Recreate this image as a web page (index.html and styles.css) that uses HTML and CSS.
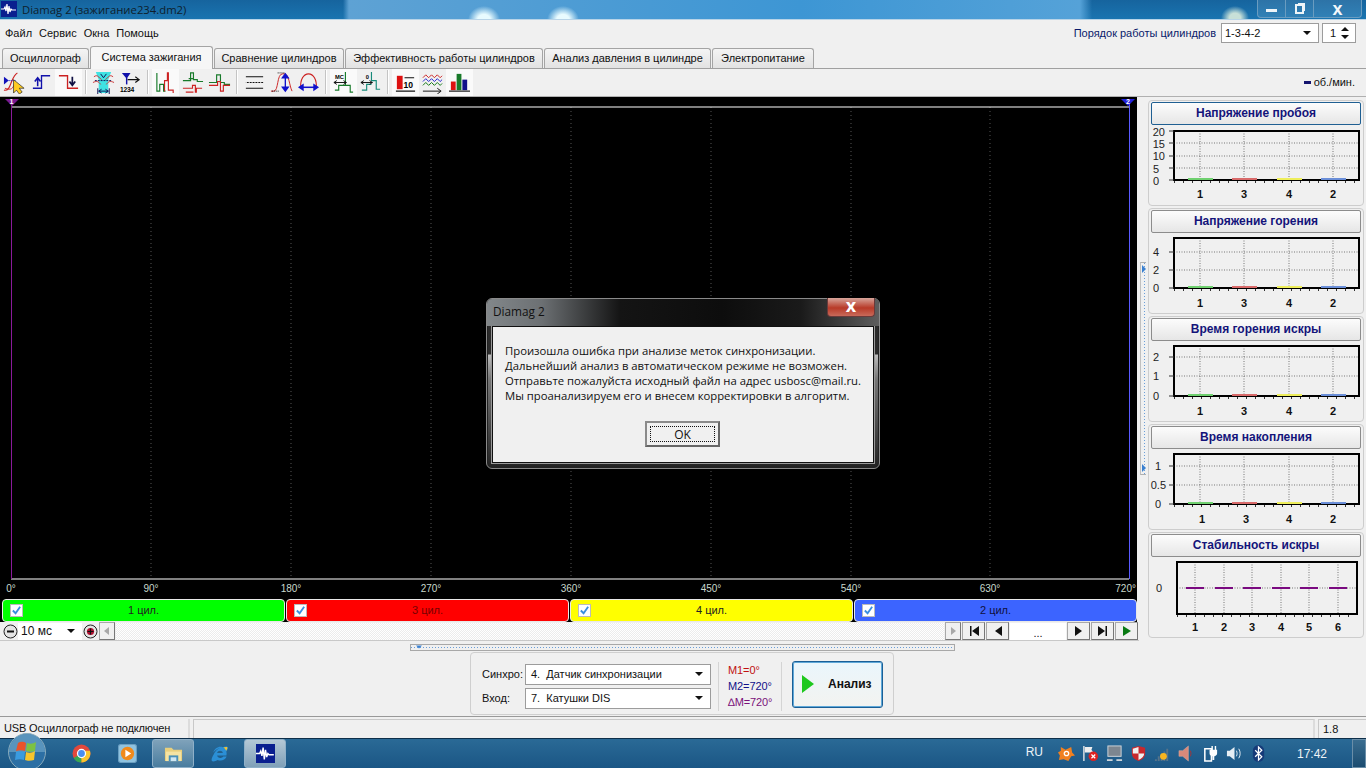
FILE: index.html
```html
<!DOCTYPE html>
<html lang="ru">
<head>
  <meta charset="UTF-8" />
  <title>Diamag 2 (зажигание234.dm2)</title>
  <link rel="stylesheet" href="styles.css">
</head>
<body>
  <div class="window">

    <!-- title bar -->
    <div class="titlebar">
      <svg class="app-icon" viewBox="0 0 16 16"><rect width="16" height="16" fill="#0a1f8f"/><path d="M0 8h3l1-2 1 4 1-7 1 10 1-8 1 6 1-3 1 1h4" fill="none" stroke="#fff" stroke-width="1.2"/></svg>
      <span class="title-text">Diamag 2 (зажигание234.dm2)</span>
      <div class="win-buttons">
        <div class="win-btn min"><i></i></div>
        <div class="win-btn restore"><i></i></div>
        <div class="win-btn close">x</div>
      </div>
    </div>

    <!-- menu -->
    <div class="menubar">
      <span>Файл</span><span>Сервис</span><span>Окна</span><span>Помощь</span>
      <div class="order">
        <label>Порядок работы цилиндров</label>
        <div class="select order-select">1-3-4-2<b class="caret"></b></div>
        <div class="spinner">1<svg viewBox="0 0 10 14" width="10" height="14"><path d="M5 1l4 4H1zM5 13l4-4H1z" fill="#111"/></svg></div>
      </div>
    </div>

    <!-- tabs -->
    <div class="tabs">
      <div class="tab w1">Осциллограф</div>
      <div class="tab w2 active">Система зажигания</div>
      <div class="tab w3">Сравнение цилиндров</div>
      <div class="tab w4">Эффективность работы цилиндров</div>
      <div class="tab w5">Анализ давления в цилиндре</div>
      <div class="tab w6">Электропитание</div>
    </div>

    <!-- toolbar -->
    <div class="toolbar">
      <div class="tool"><svg viewBox="0 0 24 24"><path d="M1 20c5 1 6-4 8-9s4-8 6-9" fill="none" stroke="#c22" stroke-width="1.2"/><path d="M2 18c4 1 8 3 10-5" fill="none" stroke="#c22"/><path d="M1 6l5 4-5 4z" fill="#11b"/><path d="M6 10h8" stroke="#11b" stroke-dasharray="1 1"/><path d="M11 9v14l3-3 3 4 3-2-3-4h5z" fill="#fc2" stroke="#222" stroke-width=".7"/></svg></div>
      <div class="tool"><svg viewBox="0 0 24 24"><path d="M3 18h9V5h9" fill="none" stroke="#11a" stroke-width="1.4"/><path d="M8 16V8M5 11l3-4 3 4" fill="none" stroke="#11a" stroke-width="1.6"/></svg></div>
      <div class="tool on"><svg viewBox="0 0 24 24"><path d="M2 5h9v13h11" fill="none" stroke="#c22" stroke-width="1.4"/><path d="M16 6v8M13 11l3 4 3-4" fill="none" stroke="#114" stroke-width="1.8"/></svg></div>
      <span class="tool-sep"></span>
      <div class="tool"><svg viewBox="0 0 24 24"><path d="M4 1h16l-3 8v14H7V9z" fill="#3fe3e3"/><path d="M2 6c4-3 5 1 8 3M22 6c-4-3-5 1-8 3M1 12c4-2 6-1 8 2M23 12c-4-2-6-1-8 2" fill="none" stroke="#c33"/><path d="M3 10h18" stroke="#115" stroke-dasharray="2 1"/><path d="M9 3l3 4 3-4" fill="none" stroke="#115"/><path d="M7 21h10M7 21l3-2M7 21l3 2M17 21l-3-2M17 21l-3 2M6 18v6M18 18v6" fill="none" stroke="#115"/></svg></div>
      <div class="tool"><svg viewBox="0 0 24 24"><path d="M3 2h9l-4 6z" fill="#11a"/><path d="M8 7v7" stroke="#11a" stroke-width="1.5"/><path d="M9 9h11M17 6l4 3-4 3" fill="none" stroke="#111" stroke-width="1.2"/><text x="1" y="22" class="tool-num">1234</text></svg></div>
      <span class="tool-sep"></span>
      <div class="tool on"><svg viewBox="0 0 24 24"><path d="M3 2v19h3V14h4v7h2" fill="none" stroke="#187a2a" stroke-width="1.2"/><path d="M11 21V10h3V2h1v18h5v3" fill="none" stroke="#c22" stroke-width="1.2"/></svg></div>
      <div class="tool"><svg viewBox="0 0 24 24"><path d="M2 10h8V2h3v7h4v2h6M8 8h5" fill="none" stroke="#187a2a" stroke-width="1.2"/><path d="M2 18h10v-3h3v7h1v-4h6M5 22h8" fill="none" stroke="#c22" stroke-width="1.2"/></svg></div>
      <div class="tool"><svg viewBox="0 0 24 24"><path d="M1 12h8V4h4v8h4v2h6" fill="none" stroke="#187a2a" stroke-width="1.2"/><path d="M1 15h9v-4h3v10h3v-6h7" fill="none" stroke="#c22" stroke-width="1.2"/></svg></div>
      <span class="tool-sep"></span>
      <div class="tool"><svg viewBox="0 0 24 24"><path d="M3 6h18M3 12h18M3 18h18" fill="none" stroke="#111" stroke-width="1.3"/><path d="M3 12h18" stroke="#f0f0f0" stroke-dasharray="1 2" stroke-width="1.4"/></svg></div>
      <div class="tool"><svg viewBox="0 0 24 24"><path d="M1 21h3c5 0 3-18 9-18h2c5 0 5 12 8 18" fill="none" stroke="#c22"/><path d="M8 2h8M2 21h8" stroke="#111" stroke-dasharray="1 1"/><path d="M16 4v16M13 7l3-4 3 4zM13 17l3 4 3-4z" fill="#11c" stroke="#11c" stroke-width="1.4"/></svg></div>
      <div class="tool"><svg viewBox="0 0 24 24"><path d="M4 18C3 9 7 3 12 3s9 6 8 15" fill="none" stroke="#c22" stroke-width="1.2"/><path d="M4 17h16" stroke="#11c" stroke-width="1.6"/><path d="M1 17l6-4v8zM23 17l-6-4v8z" fill="#11c"/></svg></div>
      <span class="tool-sep"></span>
      <div class="tool on"><svg viewBox="0 0 24 24"><path d="M14 1v14h5v7h3M14 15H7v5H3" fill="none" stroke="#187a2a" stroke-width="1.2"/><path d="M2 12h13M2 12l3-2M2 12l3 2M15 12l-3-2M15 12l-3 2" fill="none" stroke="#111"/><text x="3" y="8" class="tool-mc">MC</text></svg></div>
      <div class="tool"><svg viewBox="0 0 24 24"><path d="M13 1v9h5v9h4M13 14H8v6H3" fill="none" stroke="#178a7a" stroke-width="1.2"/><path d="M2 12h12M2 12l3-2M2 12l3 2M14 12l-3-2M14 12l-3 2" fill="none" stroke="#111"/><text x="7" y="8" class="tool-mc">0</text></svg></div>
      <span class="tool-sep"></span>
      <div class="tool on"><svg viewBox="0 0 24 24"><rect x="3" y="5" width="6" height="14" fill="#d11"/><path d="M11 7h10M2 21h20" stroke="#111" stroke-width="1.2"/><text x="10" y="18" class="tool-ten">10</text></svg></div>
      <div class="tool"><svg viewBox="0 0 24 24"><path d="M2 7l3-3 3 3 3-3 3 3 3-3 3 3 2-2" fill="none" stroke="#c22"/><path d="M2 11l3-3 3 3 3-3 3 3 3-3 3 3 2-2" fill="none" stroke="#22c"/><path d="M2 15l3-3 3 3 3-3 3 3 3-3 3 3 2-2" fill="none" stroke="#171"/><path d="M2 21h18M17 18l4 3-4 3" fill="none" stroke="#111"/></svg></div>
      <div class="tool on"><svg viewBox="0 0 24 24"><rect x="3" y="11" width="5" height="9" fill="#d11"/><rect x="9" y="3" width="5" height="17" fill="#187a2a"/><rect x="15" y="9" width="5" height="11" fill="#11118a"/><path d="M1 21h22" stroke="#111" stroke-width="1.2"/></svg></div>
      <div class="rpm"><i></i>об./мин.</div>
    </div>

    <div class="main">
      <!-- scope -->
      <div class="scope-col">
        <div class="scope">
          <svg class="scope-svg" viewBox="0 0 1137 502" width="1137" height="502">
            <path class="scope-grid" d="M151 10V482M291 10V482M431 10V482M571 10V482M711 10V482M851 10V482M990 10V482"/>
            <path d="M11 10H1129M11 482H1129" stroke="#fff" stroke-width="1.2"/>
            <path d="M11.5 2V482" stroke="#8a1a9a"/>
            <path d="M1129.5 2V482" stroke="#5a5aff"/>
            <path d="M5 2h14l-7 7z" fill="#7a1a90"/>
            <path d="M1121 2h14l-7 7z" fill="#2222dd"/>
            <text class="marker" x="11.5" y="7">1</text>
            <text class="marker" x="1128" y="7">2</text>
            <g class="scope-label">
              <text x="11" y="495">0°</text><text x="151" y="495">90°</text><text x="291" y="495">180°</text><text x="431" y="495">270°</text><text x="571" y="495">360°</text><text x="711" y="495">450°</text><text x="851" y="495">540°</text><text x="990" y="495">630°</text><text class="last" x="1136" y="495">720°</text>
            </g>
          </svg>
          <div class="channels">
            <div class="channel green"><span class="check"><svg viewBox="0 0 12 12"><path d="M2 6l3 3 5-7" fill="none" stroke="#3a8ee0" stroke-width="2"/></svg></span>1 цил.</div>
            <div class="channel red"><span class="check"><svg viewBox="0 0 12 12"><path d="M2 6l3 3 5-7" fill="none" stroke="#3a8ee0" stroke-width="2"/></svg></span>3 цил.</div>
            <div class="channel yellow"><span class="check"><svg viewBox="0 0 12 12"><path d="M2 6l3 3 5-7" fill="none" stroke="#3a8ee0" stroke-width="2"/></svg></span>4 цил.</div>
            <div class="channel blue"><span class="check"><svg viewBox="0 0 12 12"><path d="M2 6l3 3 5-7" fill="none" stroke="#3a8ee0" stroke-width="2"/></svg></span>2 цил.</div>
          </div>
        </div>

        <div class="scroll-row">
          <svg class="round" viewBox="0 0 15 15"><circle cx="7.5" cy="7.5" r="6.5" fill="#e4e4e4" stroke="#222"/><path d="M4 7.5h7" stroke="#111" stroke-width="2"/></svg>
          <div class="select time-select">10 мс<b class="caret"></b></div>
          <svg class="round" viewBox="0 0 15 15"><circle cx="7.5" cy="7.5" r="6.5" fill="#e4e4e4" stroke="#222"/><circle cx="7.5" cy="7.5" r="3.6" fill="#b01030"/><path d="M4.5 7.5h6M7.5 4.5v6" stroke="#111" stroke-width="1.2"/></svg>
          <div class="nav-btn small"><svg viewBox="0 0 10 10"><path d="M7 1v8L2 5z" fill="#a8a8a8"/></svg></div>
          <div class="track"></div>
          <div class="nav-btn small"><svg viewBox="0 0 10 10"><path d="M3 1v8l5-4z" fill="#a8a8a8"/></svg></div>
          <div class="nav-btn"><svg viewBox="0 0 12 10"><path d="M2 0h1.5v10H2zM11 0v10L4 5z" fill="#111"/></svg></div>
          <div class="nav-btn"><svg viewBox="0 0 12 10"><path d="M10 0v10L3 5z" fill="#111"/></svg></div>
          <div class="dots">...</div>
          <div class="nav-btn"><svg viewBox="0 0 12 10"><path d="M2 0v10l7-5z" fill="#111"/></svg></div>
          <div class="nav-btn"><svg viewBox="0 0 12 10"><path d="M1 0v10l7-5zM8.5 0H10v10H8.5z" fill="#111"/></svg></div>
          <div class="nav-btn"><svg viewBox="0 0 12 10"><path d="M2 0v10l8-5z" fill="#0a7a14"/></svg></div>
        </div>
      </div>

      <!-- vertical splitter -->
      <div class="vsplit">
        <div class="vsplit-line">
          <svg viewBox="0 0 4 8" width="4" height="8"><path d="M0 0v8l4-4z" fill="#3a80d0"/></svg>
          <svg viewBox="0 0 4 8" width="4" height="8"><path d="M0 0v8l4-4z" fill="#3a80d0"/></svg>
        </div>
      </div>

      <!-- right charts -->
      <div class="charts">
        <div class="group">
          <div class="group-btn focus">Напряжение пробоя</div>
          <svg class="chart" viewBox="0 0 216 82">
            <path class="grid" d="M52 6V55M96 6V55M141 6V55M185 6V55M26 18H211M26 31H211M26 43H211"/>
            <path class="frame" d="M26 6H211V55H26Z"/>
            <path class="ticks" d="M21 6H26M21 18H26M21 31H26M21 43H26M21 55H26"/>
            <path class="minor" d="M26 57H211"/>
            <path class="b1" d="M40 54H65"/><path class="b2" d="M84 54H109"/><path class="b3" d="M129 54H154"/><path class="b4" d="M173 54H198"/>
            <text class="yl" x="17" y="11">20</text><text class="yl" x="17" y="23">15</text><text class="yl" x="17" y="35">10</text><text class="yl" x="11" y="48">5</text><text class="yl" x="11" y="60">0</text>
            <text class="xl" x="52" y="73">1</text><text class="xl" x="96" y="73">3</text><text class="xl" x="141" y="73">4</text><text class="xl" x="185" y="73">2</text>
          </svg>
        </div>
        <div class="group">
          <div class="group-btn">Напряжение горения</div>
          <svg class="chart" viewBox="0 0 216 82">
            <path class="grid" d="M52 5V55M96 5V55M141 5V55M185 5V55M26 19H211M26 37H211"/>
            <path class="frame" d="M26 5H211V55H26Z"/>
            <path class="ticks" d="M21 19H26M21 37H26M21 55H26"/>
            <path class="minor" d="M26 57H211"/>
            <path class="b1" d="M40 54H65"/><path class="b2" d="M84 54H109"/><path class="b3" d="M129 54H154"/><path class="b4" d="M173 54H198"/>
            <text class="yl" x="11" y="23">4</text><text class="yl" x="11" y="41">2</text><text class="yl" x="11" y="59">0</text>
            <text class="xl" x="52" y="74">1</text><text class="xl" x="96" y="74">3</text><text class="xl" x="141" y="74">4</text><text class="xl" x="185" y="74">2</text>
          </svg>
        </div>
        <div class="group">
          <div class="group-btn">Время горения искры</div>
          <svg class="chart" viewBox="0 0 216 82">
            <path class="grid" d="M52 5V55M96 5V55M141 5V55M185 5V55M26 16H211M26 35H211"/>
            <path class="frame" d="M26 5H211V55H26Z"/>
            <path class="ticks" d="M21 16H26M21 35H26M21 55H26"/>
            <path class="minor" d="M26 57H211"/>
            <path class="b1" d="M40 54H65"/><path class="b2" d="M84 54H109"/><path class="b3" d="M129 54H154"/><path class="b4" d="M173 54H198"/>
            <text class="yl" x="11" y="20">2</text><text class="yl" x="11" y="39">1</text><text class="yl" x="11" y="59">0</text>
            <text class="xl" x="52" y="74">1</text><text class="xl" x="96" y="74">3</text><text class="xl" x="141" y="74">4</text><text class="xl" x="185" y="74">2</text>
          </svg>
        </div>
        <div class="group">
          <div class="group-btn">Время накопления</div>
          <svg class="chart" viewBox="0 0 216 82">
            <path class="grid" d="M52 5V55M96 5V55M141 5V55M185 5V55M26 17H211M26 36H211"/>
            <path class="frame" d="M26 5H211V55H26Z"/>
            <path class="ticks" d="M21 17H26M21 36H26M21 55H26"/>
            <path class="minor" d="M26 57H211"/>
            <path class="b1" d="M40 54H65"/><path class="b2" d="M84 54H109"/><path class="b3" d="M129 54H154"/><path class="b4" d="M173 54H198"/>
            <text class="yl" x="13" y="21">1</text><text class="yl" x="18" y="40">0.5</text><text class="yl" x="13" y="59">0</text>
            <text class="xl" x="54" y="74">1</text><text class="xl" x="98" y="74">3</text><text class="xl" x="141" y="74">4</text><text class="xl" x="185" y="74">2</text>
          </svg>
        </div>
        <div class="group">
          <div class="group-btn">Стабильность искры</div>
          <svg class="chart" viewBox="0 0 216 82">
            <path class="grid" d="M47 5V57M76 5V57M104 5V57M133 5V57M161 5V57M190 5V57M29 31H209"/>
            <path class="frame" d="M29 5H209V57H29Z"/>
            <path class="minor" d="M29 59H209"/>
            <path class="dash" d="M38 31H56M67 31H85M95 31H113M124 31H142M152 31H170M181 31H199"/>
            <text class="yl" x="14" y="35">0</text>
            <text class="xl" x="47" y="74">1</text><text class="xl" x="76" y="74">2</text><text class="xl" x="104" y="74">3</text><text class="xl" x="133" y="74">4</text><text class="xl" x="161" y="74">5</text><text class="xl" x="190" y="74">6</text>
          </svg>
        </div>
      </div>
    </div>

    <!-- horizontal splitter -->
    <div class="hsplit"><div class="hsplit-line"><svg viewBox="0 0 8 4" width="6" height="4"><path d="M0 0h8L4 4z" fill="#3a80d0"/></svg></div></div>

    <!-- analysis panel -->
    <div class="bottom">
      <div class="panel">
        <div class="sync-grid">
          <label>Синхро:</label>
          <div class="select sync-select">4.&nbsp; Датчик синхронизации<b class="caret"></b></div>
          <label>Вход:</label>
          <div class="select sync-select">7.&nbsp; Катушки DIS<b class="caret"></b></div>
        </div>
        <div class="marks">
          <div class="m1">М1=0°</div>
          <div class="m2">М2=720°</div>
          <div class="m3">∆М=720°</div>
        </div>
        <div class="analyze">
          <svg viewBox="0 0 12 18" width="12" height="18"><path d="M0 0v18l12-9z" fill="#1ec81e"/></svg>
          <span>Анализ</span>
        </div>
      </div>
    </div>

    <!-- status bar -->
    <div class="statusbar">
      <div class="st st-a">USB Осциллограф не подключен</div>
      <div class="st st-b"></div>
      <div class="st st-c">1.8</div>
    </div>

    <!-- windows taskbar -->
    <div class="taskbar">
      <svg class="orb" viewBox="0 0 38 38">
        <circle cx="19" cy="19" r="18.5" fill="#2c6fa4" stroke="#8ab" stroke-width="1"/>
        <path d="M1 19a18 18 0 0 1 36 0z" fill="#7fb2d2" opacity=".55"/>
        <path d="M10 10c3-2 6-1 8 0l-1 8c-3-1-6-1-9 0z" fill="#e8532b"/>
        <path d="M19 10c3 1 6 1 9-1l-1 9c-3 1-6 1-9 0z" fill="#7cc242"/>
        <path d="M8 19c3-1 6-1 9 0l-1 8c-3-1-6-1-9 0z" fill="#3a9be0"/>
        <path d="M18 19c3 1 6 1 9-1l-1 9c-3 1-7 1-9 0z" fill="#f7c52c"/>
      </svg>
      <div class="task chrome"><svg viewBox="0 0 18 18"><circle cx="9" cy="9" r="8.5" fill="#e2483c"/><path d="M9 9L1.6 13.2A8.5 8.5 0 0 0 9 17.5z" fill="#35a853"/><path d="M9 9v8.5A8.5 8.5 0 0 0 17 6.5H9z" fill="#fbc52c"/><circle cx="9" cy="9" r="3.8" fill="#4a8df0" stroke="#fff" stroke-width="1.2"/></svg></div>
      <div class="task wmp"><svg viewBox="0 0 18 18"><rect x=".5" y=".5" width="17" height="17" rx="2" fill="#8fc3e0" stroke="#6a9ec0"/><circle cx="9" cy="9" r="6.3" fill="#f08a1c"/><path d="M7 5.5v7l5.5-3.5z" fill="#fff"/></svg></div>
      <div class="task active folder"><svg viewBox="0 0 20 18"><path d="M1 3h7l2 2h9v12H1z" fill="#e9cf7c"/><rect x="2" y="7" width="16" height="10" fill="#f5e3a3"/><path d="M5 11h10v6H5z" fill="#4a90b8"/><path d="M7 13h6v4H7z" fill="#cfe6f2"/></svg></div>
      <div class="task ie"><svg viewBox="0 0 20 20"><path d="M15 12.2H7.5c.4 3 4.600 3.400 6.500 1h3.500c-1.500 3.800-6 5.300-9.500 3.600-1.800 1-4.800 2.300-6 1.100-1-1.200.3-4 1.700-6.500C5 8 7.800 5.500 10.500 4.300 8.500 4.600 5.500 6.600 3.500 9 4.800 4.400 9.500 1.800 13.500 3.500c1.800-.9 4.100-1.400 5-.4.800 1-.2 3-1.300 4.700.4 1.400.4 3 .1 4.400zM7.500 9.500h6c-.2-3.200-5.500-3.200-6 0z" fill="#2b8fd6"/><path d="M14 3.700c1.500-.6 3.500-1 4.200-.3.500.7-.2 2.300-1.200 3.700-.6-1.500-1.700-2.700-3-3.400z" fill="#f2c230"/></svg></div>
      <div class="task active app"><svg viewBox="0 0 16 16"><rect width="16" height="16" fill="#0a1f8f"/><path d="M0 8h3l1-2 1 4 1-7 1 10 1-8 1 6 1-3 1 1h4" fill="none" stroke="#fff" stroke-width="1.2"/></svg></div>

      <div class="tray">
        <span class="lang">RU</span>
        <svg class="tr" viewBox="0 0 18 18"><path d="M3 2l5 3 6-3 1 6 3 3-4 1-3 5-5-2-5 1 1-5-2-3 3-2z" fill="#f08020"/><circle cx="9" cy="9" r="3" fill="#fff"/><circle cx="9" cy="9" r="1.6" fill="#f08020"/></svg>
        <svg class="tr" viewBox="0 0 18 18"><path d="M2 1v16" stroke="#eee" stroke-width="1.4"/><path d="M3 2h8l-1 3 2 3H3z" fill="#eee"/><circle cx="12" cy="12" r="5" fill="#d22"/><path d="M10 10l4 4M14 10l-4 4" stroke="#fff" stroke-width="1.3"/></svg>
        <svg class="tr" viewBox="0 0 18 18"><rect x="2" y="1" width="14" height="11" fill="#7c8690" stroke="#cfd6dc"/><path d="M1 15h6v2H1zM11 15h6v2h-6z" fill="#cfd6dc"/></svg>
        <svg class="tr" viewBox="0 0 18 18"><path d="M9 1l7 2v6c0 4-3 6.500-7 8-4-1.500-7-4-7-8V3z" fill="#c9282d"/><path d="M9 2v7H3V4zM9 9h6c0 3-2.500 5.500-6 6.800z" fill="#f1f1f1"/></svg>
        <svg class="tr" viewBox="0 0 18 18"><path d="M1 15h2v2H1zM4 12h2v5H4zM7 10h2v7H7zM10 7h2v10h-2zM13 4h2v13h-2z" fill="#56738a"/><circle cx="10" cy="12" r="3.600" fill="#f7b520"/></svg>
        <svg class="tr" viewBox="0 0 18 18"><path d="M1 6h4l6-5v16l-6-5H1z" fill="#d9897a" stroke="#e8b0a0" stroke-width=".5"/><path d="M13 6c1 2 1 4 0 6" fill="none" stroke="#a33"/></svg>
        <svg class="tr" viewBox="0 0 18 18"><path d="M3 4h7v13H3z" fill="none" stroke="#fff" stroke-width="1.600"/><path d="M8 5h8v4c0 2-2 3-4 3s-4-1-4-3zM10 1h1.500v4H10zM13.500 1H15v4h-1.500zM11 12h2v4h-2z" fill="#fff"/></svg>
        <svg class="tr" viewBox="0 0 18 18"><path d="M1 6h3l5-4v14l-5-4H1z" fill="#e6eef4"/><path d="M11 6c1 2 1 4 0 6M13.500 4c2 3 2 7 0 10" fill="none" stroke="#e6eef4"/></svg>
        <svg class="tr" viewBox="0 0 18 18"><rect x="3" y="0" width="12" height="18" rx="6" fill="#153a78"/><path d="M5.500 5.500l7 7L9 16V2l3.500 3.500-7 7" fill="none" stroke="#fff" stroke-width="1.300"/></svg>
        <span class="clock">17:42</span>
        <div class="show-desktop"></div>
      </div>
    </div>

    <!-- message dialog -->
    <div class="dialog">
      <div class="dialog-head">
        <span>Diamag 2</span>
        <div class="dialog-close">x</div>
      </div>
      <div class="dialog-body">
        <p>Произошла ошибка при анализе меток синхронизации.<br>Дальнейший анализ в автоматическом режиме не возможен.<br>Отправьте пожалуйста исходный файл на адрес usbosc@mail.ru.<br>Мы проанализируем его и внесем корректировки в алгоритм.</p>
        <div class="dialog-ok"><span>OK</span></div>
      </div>
    </div>
  </div>
</body>
</html>
```

FILE: styles.css
```css
* {
  box-sizing: border-box;
}

body {
  margin: 0;
  font-family: "Liberation Sans", Arial, sans-serif;
  font-size: 11px;
  color: #111;
  background: #f0f0f0;
  overflow: hidden;
}

.window {
  position: relative;
  display: flex;
  flex-direction: column;
  width: 1366px;
  height: 768px;
  overflow: hidden;
}

/* title bar */
.titlebar {
  height: 20px;
  display: flex;
  align-items: center;
  padding-left: 1px;
  border-bottom: 1px solid #b8d4e8;
  background:
    radial-gradient(16px 14px at 484px 20px, #e8fbff 40%, transparent 100%),
    radial-gradient(16px 14px at 563px 20px, #e8fbff 40%, transparent 100%),
    radial-gradient(14px 12px at 1235px 18px, #c8e0d8 40%, transparent 100%),
    linear-gradient(90deg, transparent 343px, #5ea2d4 349px, #3d96d4 800px, #55a2d8 1080px, transparent 1092px),
    linear-gradient(180deg, #16649e, #1a74b0);
}

.app-icon {
  width: 16px;
  height: 16px;
}

.title-text {
  margin-left: 5px;
  font-family: "Open Sans", sans-serif;
  font-size: 11.3px;
  color: #0e1e2c;
}

.win-buttons {
  margin-left: auto;
  margin-right: 4px;
  display: flex;
  align-self: flex-start;
  height: 18px;
  border: 1px solid #6a9cc0;
  border-top: none;
  border-radius: 0 0 4px 4px;
  background: rgba(255, 255, 255, 0.1);
}

.win-btn {
  width: 28px;
  display: flex;
  align-items: center;
  justify-content: center;
  color: #f4f8fb;
  border-right: 1px solid #6a9cc0;
}

.win-btn.close {
  width: 47px;
  border-right: none;
  font-weight: bold;
  font-size: 18px;
  line-height: 14px;
}

.win-btn.min i {
  width: 11px;
  height: 3px;
  margin-top: 4px;
  background: #eef4f8;
}

.win-btn.restore i {
  width: 9px;
  height: 10px;
  border: 2px solid #eef4f8;
  box-shadow: 2px -2px 0 -1px #eef4f8;
}

/* menu */
.menubar {
  height: 26px;
  display: flex;
  align-items: center;
  padding-left: 5px;
  gap: 7px;
  background: #f0f0f0;
}

.order {
  margin-left: auto;
  margin-right: 10px;
  display: flex;
  align-items: center;
}

.order label {
  color: #0a1a6a;
  margin-right: 5px;
}

.select {
  position: relative;
  display: flex;
  align-items: center;
  background: #fff;
  border: 1px solid #9c9c9c;
  padding-left: 3px;
}

.caret {
  position: absolute;
  right: 7px;
  top: 50%;
  margin-top: -2px;
  border-left: 4px solid transparent;
  border-right: 4px solid transparent;
  border-top: 4px solid #111;
}

.order-select {
  width: 98px;
  height: 20px;
}

.spinner {
  width: 34px;
  height: 20px;
  margin-left: 3px;
  padding: 0 5px 0 7px;
  display: flex;
  align-items: center;
  justify-content: space-between;
  background: #fff;
  border: 1px solid #9c9c9c;
}

/* tabs */
.tabs {
  height: 23px;
  padding-left: 2px;
  display: flex;
  align-items: flex-end;
  border-bottom: 1px solid #a0a0a0;
}

.tab {
  height: 20px;
  margin-right: 1px;
  display: flex;
  align-items: center;
  justify-content: center;
  background: linear-gradient(180deg, #f4f4f4, #e2e2e2);
  border: 1px solid #a4a4a4;
  border-bottom: none;
  border-radius: 3px 3px 0 0;
}

.tab.active {
  height: 23px;
  margin-bottom: -1px;
  padding-bottom: 1px;
  background: #f6f6f6;
  position: relative;
}

.w1 { width: 87px; }
.w2 { width: 123px; }
.w3 { width: 130px; }
.w4 { width: 198px; }
.w5 { width: 167px; }
.w6 { width: 102px; }

/* toolbar */
.toolbar {
  height: 28px;
  padding-left: 1px;
  display: flex;
  align-items: center;
  border-bottom: 1px solid #b0b0b0;
}

.tool {
  width: 27px;
  height: 27px;
  padding: 2px;
}

.tool svg {
  display: block;
  width: 23px;
  height: 23px;
}

.tool.on {
  background: #fafafa;
}

.tool-sep {
  width: 2px;
  height: 24px;
  margin: 0 3px;
  background: #c4c4c4;
  border-right: 1px solid #fff;
}

.tool-num {
  font-size: 7px;
  font-weight: bold;
  letter-spacing: -0.2px;
}

.tool-mc {
  font-size: 6px;
  font-weight: bold;
}

.tool-ten {
  font-size: 9px;
  font-weight: bold;
}

.rpm {
  margin-left: auto;
  margin-right: 11px;
  font-size: 11px;
  display: flex;
  align-items: center;
}

.rpm i {
  width: 7px;
  height: 3px;
  margin-right: 3px;
  background: #14146e;
}

/* main area */
.main {
  height: 543px;
  display: flex;
}

.scope-col {
  width: 1139px;
  display: flex;
  flex-direction: column;
}

.scope {
  width: 1137px;
  height: 525px;
  background: #000;
}

.scope-svg {
  display: block;
}

.scope-grid {
  stroke: #555;
  stroke-dasharray: 1 3;
  fill: none;
}

.marker {
  fill: #fff;
  font-size: 7px;
  font-weight: bold;
  text-anchor: middle;
}

.scope-label text {
  fill: #c8d8cc;
  font-size: 10px;
  text-anchor: middle;
}

.scope-label .last {
  text-anchor: end;
}

.channels {
  display: flex;
  gap: 1px;
  padding: 0 0 0 2px;
  height: 23px;
}

.channel {
  position: relative;
  flex: 1;
  display: flex;
  align-items: center;
  justify-content: center;
  border-radius: 4px;
  border: 1px solid #e8e8e8;
  font-size: 11px;
  color: #222;
}

.green { background: #00ff00; }
.red { background: #ff0000; color: #700; }
.yellow { background: #ffff00; }
.blue { background: #3c64ff; color: #101040; }

.check {
  position: absolute;
  left: 7px;
  top: 4px;
  width: 13px;
  height: 13px;
  background: #fff;
  border: 1px solid #bbb;
}

.check svg {
  display: block;
}

.scroll-row {
  height: 18px;
  margin-top: 1px;
  padding-left: 3px;
  display: flex;
  align-items: center;
  border-bottom: 1px solid #c8c8c8;
}

.round {
  width: 15px;
  height: 15px;
  flex: none;
}

.time-select {
  width: 64px;
  height: 17px;
  border: none;
  font-size: 12px;
  padding-left: 3px;
  margin-right: 1px;
}

.nav-btn {
  width: 23px;
  height: 18px;
  margin-right: 1px;
  display: flex;
  align-items: center;
  justify-content: center;
  background: #f0f0f0;
  border: 1px solid #a8a8a8;
  border-right-color: #777;
  border-bottom-color: #777;
}

.nav-btn svg {
  width: 12px;
  height: 10px;
}

.nav-btn.small {
  width: 16px;
  margin-left: 1px;
}

.track {
  flex: 1;
  height: 17px;
  background: repeating-conic-gradient(#fff 0 25%, #ececec 0 50%) 0 0 / 2px 2px;
}

.dots {
  width: 56px;
  height: 17px;
  margin-right: 1px;
  background: #fff;
  text-align: center;
  line-height: 20px;
}

.vsplit {
  width: 9px;
  display: flex;
  align-items: flex-start;
}

.vsplit-line {
  width: 6px;
  height: 213px;
  margin-top: 165px;
  margin-left: 1px;
  padding: 2px 0 2px 1px;
  display: flex;
  flex-direction: column;
  justify-content: space-between;
  border: 1px solid #b0b0b0;
  border-right: none;
  border-left-color: #c0c0c0;
  background: repeating-linear-gradient(180deg, #6a9ed8 0 1px, transparent 1px 3px) 3px 0 / 1px 100% no-repeat;
}

.vsplit-line svg {
  display: block;
}

/* right charts */
.charts {
  width: 218px;
  padding-top: 3px;
  display: flex;
  flex-direction: column;
  gap: 2px;
}

.group {
  width: 216px;
  height: 106px;
  border: 1px solid #cdcdcd;
  border-radius: 4px;
  padding: 1px 2px;
  position: relative;
}

.group-btn {
  height: 23px;
  display: flex;
  align-items: center;
  justify-content: center;
  font-size: 12px;
  font-weight: bold;
  color: #14147a;
  background: linear-gradient(180deg, #fcfcfc, #e6e6e6);
  border: 1px solid #8c8c8c;
  border-radius: 2px;
}

.group-btn.focus {
  border-color: #1f5f92;
}

.chart {
  display: block;
  width: 216px;
  height: 82px;
  margin-left: -3px;
}

.grid {
  stroke: #777;
  stroke-dasharray: 1 1.5;
  fill: none;
}

.frame {
  stroke: #000;
  stroke-width: 2;
  fill: none;
}

.ticks {
  stroke: #333;
  fill: none;
}

.minor {
  stroke: #333;
  stroke-width: 2;
  stroke-dasharray: 1 8;
  fill: none;
}

.b1, .b2, .b3, .b4, .dash {
  stroke-width: 2;
  fill: none;
}

.b1 { stroke: #6fd06f; }
.b2 { stroke: #d86a6a; }
.b3 { stroke: #eeee5a; }
.b4 { stroke: #6a8ed8; }
.dash { stroke: #7a0a80; }

.yl {
  font-size: 11px;
  fill: #222;
  text-anchor: end;
}

.xl {
  font-size: 11px;
  font-weight: bold;
  fill: #111;
  text-anchor: middle;
}

/* splitter + bottom panel */
.hsplit {
  height: 12px;
  padding: 4px 0 0 410px;
}

.hsplit-line {
  width: 545px;
  height: 7px;
  padding-left: 5px;
  display: flex;
  align-items: center;
  border: 1px solid #a8a8a8;
  background: repeating-linear-gradient(90deg, #6a9ed8 0 1px, transparent 1px 3px) 0 2px / 100% 1px no-repeat;
}

.bottom {
  height: 66px;
  padding-left: 470px;
  border-bottom: 1px solid #999;
}

.panel {
  width: 424px;
  height: 63px;
  padding: 9px 10px 0 11px;
  display: flex;
  border: 1px solid #cfcfcf;
  border-radius: 4px;
}

.sync-grid {
  display: grid;
  grid-template-columns: 43px 186px;
  grid-template-rows: 21px 21px;
  row-gap: 3px;
  align-items: center;
  margin-top: 2px;
  height: 45px;
}

.sync-select {
  height: 21px;
  padding-left: 5px;
}

.marks {
  width: 64px;
  margin: 0 10px 0 7px;
  height: 49px;
  padding: 0 0 0 9px;
  border-left: 1px solid #d4d4d4;
  border-right: 1px solid #d4d4d4;
  font-size: 11px;
  line-height: 16px;
  letter-spacing: -0.1px;
  white-space: nowrap;
}

.m1 { color: #c01010; }
.m2 { color: #10108a; }
.m3 { color: #7a107a; }

.analyze {
  width: 91px;
  height: 47px;
  margin-top: -1px;
  padding-left: 9px;
  display: flex;
  align-items: center;
  gap: 14px;
  font-weight: bold;
  font-size: 12px;
  background: linear-gradient(180deg, #eaf6fc, #f3f3f0);
  border: 1px solid #1a5f96;
  box-shadow: inset 0 0 0 1px #5fa8d8;
  border-radius: 3px;
}

/* status bar */
.statusbar {
  height: 21px;
  padding-top: 2px;
  display: flex;
  font-size: 11px;
}

.st {
  height: 19px;
  padding: 3px 0 0 4px;
  border-right: 2px solid #dcdcdc;
  margin-right: 3px;
}

.st-a { width: 190px; letter-spacing: -0.15px; }
.st-b { flex: 1; border-left: 1px solid #c8c8c8; border-top: 1px solid #c8c8c8; }
.st-c { width: 48px; margin-right: 0; border-right: none; border-left: 1px solid #c8c8c8; border-top: 1px solid #c8c8c8; }

/* windows taskbar */
.taskbar {
  position: relative;
  height: 30px;
  display: flex;
  align-items: center;
  padding-left: 60px;
  background: linear-gradient(180deg, #2a6a96, #1b5685);
  border-top: 1px solid #0e2f4a;
}

.orb {
  position: absolute;
  left: 8px;
  top: -6px;
  width: 38px;
  height: 38px;
}

.task {
  width: 42px;
  height: 29px;
  margin-right: 4px;
  display: flex;
  align-items: center;
  justify-content: center;
}

.task svg {
  width: 19px;
  height: 19px;
}

.task.active {
  border: 1px solid #8fb0c8;
  border-radius: 3px;
  background: linear-gradient(180deg, #7fa2ba, #4a7d9f);
}

.task.active.app {
  background: linear-gradient(180deg, #b4c8d6, #7fa0b8);
}

.tray {
  margin-left: auto;
  height: 100%;
  display: flex;
  align-items: center;
  gap: 7px;
  color: #eef4f8;
  font-size: 12px;
}

.tr {
  width: 17px;
  height: 17px;
}

.lang {
  margin: 0 8px 4px 0;
}

.clock {
  margin: 0 18px 0 23px;
}

.show-desktop {
  width: 14px;
  height: 29px;
  border: 1px solid #6a8ea8;
  background: linear-gradient(180deg, #3a6d90, #1b4c70);
}

/* message dialog */
.dialog {
  position: absolute;
  left: 486px;
  top: 298px;
  width: 394px;
  height: 171px;
  padding: 0 5px 5px;
  border: 1px solid #8a8a8a;
  border-radius: 6px;
  box-shadow: inset 0 0 0 1px #222;
  background:
    linear-gradient(180deg, #2c2c2c 0, #2c2c2c 55px, #bdbdbd 56px, #777 80px, #222 100%);
}

.dialog-head {
  position: relative;
  height: 27px;
  margin: 0 -5px;
  padding: 4px 0 0 6px;
  border-radius: 5px 5px 0 0;
  font-family: "Open Sans", sans-serif;
  font-size: 11.8px;
  color: #111;
  background: linear-gradient(90deg, #82878a 0, #6c7073 14%, #141414 34%, #0d0d0d 60%, #1a1a1a 80%, #5e5e5e 100%);
}

.dialog-close {
  position: absolute;
  right: 4px;
  top: -1px;
  width: 48px;
  height: 19px;
  text-align: center;
  font-size: 18px;
  font-weight: bold;
  line-height: 14px;
  color: #fff;
  border: 1px solid #6a3a3a;
  border-top: none;
  border-radius: 0 0 4px 4px;
  background: linear-gradient(180deg, #d8a59a, #b83a28 55%, #c86a5a);
}

.dialog-body {
  height: 137px;
  padding: 16px 13px 0 12px;
  border: 1px solid #111;
  box-shadow: 0 0 0 1px #999;
  background: #f0f0f0;
  font-family: "Open Sans", sans-serif;
}

.dialog-body p {
  margin: 0;
  font-size: 11.3px;
  line-height: 15px;
  white-space: nowrap;
}

.dialog-ok {
  width: 75px;
  height: 26px;
  margin: 18px auto 0;
  padding: 3px;
  border: 2px solid #8a8a8a;
  border-right-color: #666;
  border-bottom-color: #666;
  background: #f0f0f0;
}

.dialog-ok span {
  display: block;
  height: 16px;
  text-align: center;
  font-size: 12px;
  line-height: 15px;
  border: 1px dotted #111;
}
```
